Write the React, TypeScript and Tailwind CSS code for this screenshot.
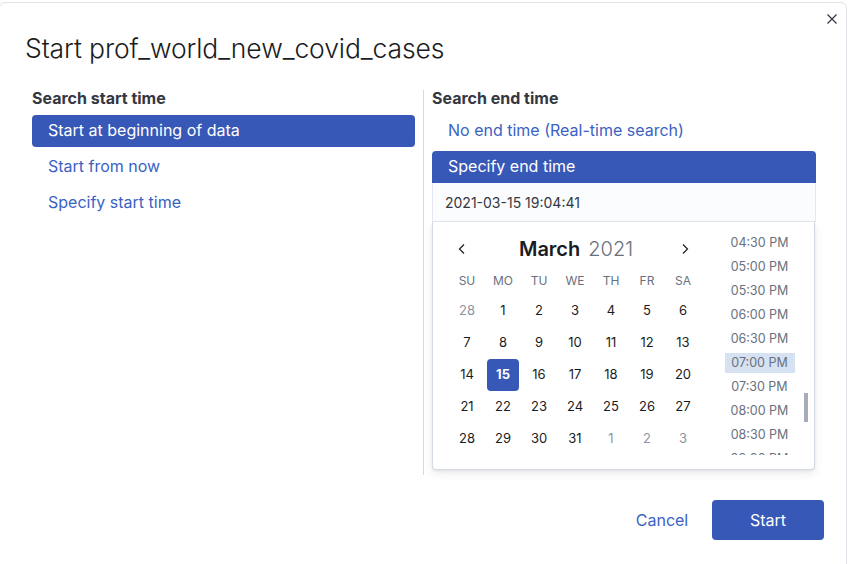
import React from 'react';

const weeks: [string, boolean][][] = [
  [['28', true], ['1', false], ['2', false], ['3', false], ['4', false], ['5', false], ['6', false]],
  [['7', false], ['8', false], ['9', false], ['10', false], ['11', false], ['12', false], ['13', false]],
  [['14', false], ['15', false], ['16', false], ['17', false], ['18', false], ['19', false], ['20', false]],
  [['21', false], ['22', false], ['23', false], ['24', false], ['25', false], ['26', false], ['27', false]],
  [['28', false], ['29', false], ['30', false], ['31', false], ['1', true], ['2', true], ['3', true]],
];

const days = ['SU', 'MO', 'TU', 'WE', 'TH', 'FR', 'SA'];

const times = ['04:30 PM', '05:00 PM', '05:30 PM', '06:00 PM', '06:30 PM', '07:00 PM', '07:30 PM', '08:00 PM', '08:30 PM', '09:00 PM'];

const Chevron = ({ dir }: { dir: 'left' | 'right' }) => (
  <svg width="16" height="16" viewBox="0 0 16 16" fill="none" stroke="#1a1c21" strokeWidth="1.2">
    {dir === 'left' ? <path d="M10 3.5 5.5 8l4.5 4.5" /> : <path d="M6 3.5 10.5 8 6 12.5" />}
  </svg>
);

const Option = ({ label, selected, squareBottom }: { label: string; selected?: boolean; squareBottom?: boolean }) => (
  <div
    className={`h-8 flex items-center px-4 pb-[2px] text-[16px] ${
      selected ? 'bg-[#3858b8] text-white' : 'text-[#3a62c3]'
    } ${selected ? (squareBottom ? 'rounded-t' : 'rounded') : ''}`}
  >
    {label}
  </div>
);

export default function App() {
  return (
    <div className="w-[849px] h-[564px] bg-white overflow-hidden" style={{ fontFamily: 'Inter, "Noto Sans", sans-serif' }}>
      <div className="mt-[2px] -ml-px w-[848px] h-[570px] border border-[#dfe3ea] rounded-md bg-white flex flex-col">
        <div className="flex justify-between items-start">
          <h1 className="pl-[25px] pt-[25px] text-[26.5px] leading-10 font-light text-[#1a1c21] tracking-[-0.1px]">
            Start prof_world_new_covid_cases
          </h1>
          <button className="mt-[8px] mr-[6px] w-4 h-4 flex items-center justify-center">
            <svg width="12" height="12" viewBox="0 0 12 12" stroke="#343741" strokeWidth="1.2">
              <path d="M1.5 1.5l9 9M10.5 1.5l-9 9" />
            </svg>
          </button>
        </div>

        <div className="flex pl-[32px] mt-[18px]">
          <div className="w-[383px]">
            <h3 className="text-[16px] leading-6 font-bold text-[#343741]">Search start time</h3>
            <div className="mt-[5px] flex flex-col gap-1">
              <Option label="Start at beginning of data" selected />
              <Option label="Start from now" />
              <Option label="Specify start time" />
            </div>
          </div>
          <div className="ml-2 mt-1 w-px h-[385px] bg-[#d3dae6]" />
          <div className="ml-2 w-[384px]">
            <h3 className="text-[16px] leading-6 font-bold text-[#343741]">Search end time</h3>
            <div className="mt-[5px] flex flex-col">
              <Option label="No end time (Real-time search)" />
              <div className="h-1" />
              <Option label="Specify end time" selected squareBottom />
              <div className="h-[39px] bg-[#fbfcfd] border-x border-b border-[#e3e8f2] flex items-center px-3 text-[14px] text-[#343741]">
                2021-03-15 19:04:41
              </div>
              <div className="w-[383px] h-[248px] bg-white border border-t-0 border-[#d3dae6] rounded-b shadow-[0_4px_8px_rgba(0,0,0,0.08),0_1px_3px_rgba(0,0,0,0.06)] flex">
                <div className="pl-[16px] pt-[16px] w-[270px]">
                  <div className="flex items-center h-[22px]">
                    <div className="w-[26px] flex justify-center">
                      <Chevron dir="left" />
                    </div>
                    <div className="flex-1 flex justify-center items-baseline gap-[8px] text-[20px] pl-[8px]">
                      <span className="font-semibold text-[#1a1c21]">March</span>
                      <span className="font-light text-[#69707d]">2021</span>
                    </div>
                    <div className="w-[34px] flex justify-start pl-[8px]">
                      <Chevron dir="right" />
                    </div>
                  </div>
                  <div className="grid grid-cols-[repeat(7,36px)] mt-[13px]">
                    {days.map((d) => (
                      <div key={d} className="h-4 flex items-center justify-center text-[12px] text-[#69707d]">
                        {d}
                      </div>
                    ))}
                  </div>
                  <div className="mt-[6px] flex flex-col">
                    {weeks.map((w, i) => (
                      <div key={i} className="grid grid-cols-[repeat(7,36px)]">
                        {w.map(([n, muted], j) => {
                          const sel = i === 2 && n === '15';
                          return (
                            <div key={j} className="h-8 flex items-center justify-center">
                              <span
                                className={`w-8 h-8 flex items-center justify-center text-[13px] rounded ${
                                  sel ? 'bg-[#3858b8] text-white font-bold' : muted ? 'text-[#8e949f]' : 'text-[#1a1c21]'
                                }`}
                              >
                                {n}
                              </span>
                            </div>
                          );
                        })}
                      </div>
                    ))}
                  </div>
                </div>
                <div className="relative flex-1 mt-[15px] mb-[14px] overflow-hidden pr-[14px]">
                  <div className="-mt-[6px] flex flex-col items-center pl-[16px]">
                    {times.map((t) => (
                      <div key={t} className="h-6 flex items-center justify-center">
                        <span
                          className={`w-[70px] h-5 flex items-center justify-center text-[12.5px] text-[#69707d] ${
                            t === '07:00 PM' ? 'bg-[#d6e2f2]' : ''
                          }`}
                        >
                          {t}
                        </span>
                      </div>
                    ))}
                  </div>
                  <div className="absolute right-[6px] top-[156px] w-[4px] h-[29px] bg-[#a7adb7]" />
                </div>
              </div>
            </div>
          </div>
        </div>

        <div className="flex justify-end items-center pr-[22px] mt-[25px]">
          <button className="w-[100px] h-10 text-[16px] text-[#3a62c3]">Cancel</button>
          <button className="w-[112px] h-10 rounded bg-[#3858b8] text-white text-[16px]">Start</button>
        </div>
      </div>
    </div>
  );
}
